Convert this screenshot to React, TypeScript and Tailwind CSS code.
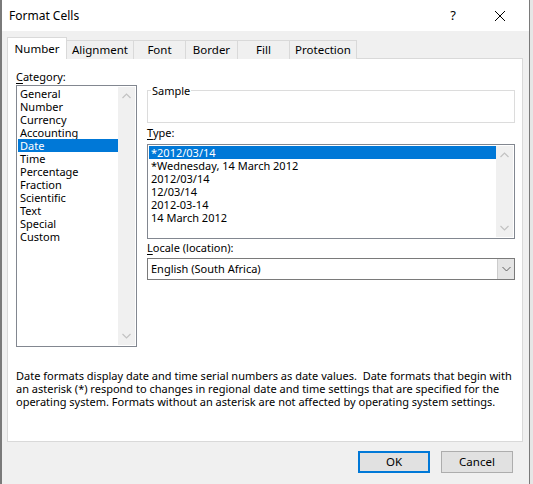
import React from 'react';

const categories = [
  'General', 'Number', 'Currency', 'Accounting', 'Date', 'Time',
  'Percentage', 'Fraction', 'Scientific', 'Text', 'Special', 'Custom',
];

const types = [
  '*2012/03/14',
  '*Wednesday, 14 March 2012',
  '2012/03/14',
  '12/03/14',
  '2012-03-14',
  '14 March 2012',
];

const tabs = ['Alignment', 'Font', 'Border', 'Fill', 'Protection'];
const tabWidths = ['w-[68px]', 'w-[53px]', 'w-[53px]', 'w-[53px]', 'w-[68px]'];

const Chevron = ({ up }: { up?: boolean }) => (
  <svg width="9" height="6" viewBox="0 0 9 6" className="block">
    <path
      d={up ? 'M0.5 5 L4.5 1 L8.5 5' : 'M0.5 1 L4.5 5 L8.5 1'}
      fill="none"
      stroke="#c2c2c2"
      strokeWidth="1.2"
    />
  </svg>
);

const ScrollBar = () => (
  <div className="w-[17px] h-full bg-[#f0f0f0] flex flex-col items-center justify-between py-[6px]">
    <Chevron up />
    <Chevron />
  </div>
);

export default function App() {
  return (
    <div
      className="w-[533px] h-[484px] bg-[#e6e6e6] flex text-[11px] text-black overflow-hidden"
      style={{ fontFamily: '"Noto Sans", "Open Sans", sans-serif' }}
    >
      <div className="w-[530px] h-full flex flex-col bg-[#f0f0f0] border-l-2 border-r border-[#7a7a7a]">
        {/* title bar */}
        <div className="h-[31px] bg-white flex items-center pl-[7px] shrink-0">
          <span className="text-[12px]">Format Cells</span>
          <span className="ml-auto text-[13px] mr-[38px]">?</span>
          <svg width="12" height="12" viewBox="0 0 12 12" className="mr-[23px]">
            <path d="M1 1 L11 11 M11 1 L1 11" stroke="#000" strokeWidth="1" />
          </svg>
        </div>

        <div className="pl-[5px] pt-[7px] flex flex-col">
          {/* tabs */}
          <div className="flex items-end h-[21px] relative z-10 text-[11.5px]">
            <div className="w-[60px] h-[22px] bg-white border border-b-0 border-[#d9d9d9] flex items-center justify-center">
              Number
            </div>
            {tabs.map((t, i) => (
              <div
                key={t}
                className={`${tabWidths[i]} h-[19px] -ml-px bg-[#f0f0f0] border border-b-0 border-[#d9d9d9] flex items-center justify-center`}
              >
                {t}
              </div>
            ))}
          </div>

          {/* panel */}
          <div className="w-[516px] h-[384px] bg-white border border-[#d9d9d9] -mt-px pl-[8px] pr-[7px] pt-[9px] flex flex-col">
            <div className="flex gap-[10px]">
              {/* left column */}
              <div className="w-[121px] flex flex-col">
                <div className="h-[17px] leading-[15px] pt-px">
                  <span className="underline underline-offset-2">C</span>ategory:
                </div>
                <div className="h-[262px] border border-[#828790] flex p-px">
                  <div className="flex-1 flex flex-col">
                    {categories.map((c) => (
                      <div
                        key={c}
                        className={`h-[13px] leading-[13px] pl-[2px] ${
                          c === 'Date' ? 'bg-[#0078d7] text-white' : ''
                        }`}
                      >
                        {c}
                      </div>
                    ))}
                  </div>
                  <ScrollBar />
                </div>
              </div>

              {/* right column */}
              <div className="w-[368px] flex flex-col pt-[22px]">
                <div className="h-[33px] border border-[#dcdcdc] relative">
                  <span className="absolute -top-[7px] left-[3px] bg-white px-[1px] leading-[14px]">
                    Sample
                  </span>
                </div>
                <div className="h-[21px] flex items-center">
                  <span>
                    <span className="underline underline-offset-2">T</span>ype:
                  </span>
                </div>
                <div className="h-[95px] border border-[#828790] flex p-px">
                  <div className="flex-1 flex flex-col">
                    {types.map((t, i) => (
                      <div
                        key={t}
                        className={`h-[13px] leading-[13px] pl-[2px] ${
                          i === 0 ? 'bg-[#0078d7] text-white' : ''
                        }`}
                      >
                        {t}
                      </div>
                    ))}
                  </div>
                  <ScrollBar />
                </div>
                <div className="h-[19px] flex items-center">
                  <span>
                    <span className="underline underline-offset-2">L</span>ocale (location):
                  </span>
                </div>
                <div className="h-[22px] border border-[#7a7a7a] flex items-center pl-[3px]">
                  <span className="flex-1">English (South Africa)</span>
                  <div className="w-[17px] h-[20px] bg-[#e5e5e5] border-l border-[#cccccc] flex items-center justify-center">
                    <svg width="9" height="6" viewBox="0 0 9 6">
                      <path d="M0.5 1 L4.5 5 L8.5 1" fill="none" stroke="#606060" strokeWidth="1" />
                    </svg>
                  </div>
                </div>
              </div>
            </div>

            <div className="mt-[22px] leading-[13px] whitespace-nowrap flex flex-col">
              <span>Date formats display date and time serial numbers as date values.&nbsp; Date formats that begin with</span>
              <span>an asterisk (*) respond to changes in regional date and time settings that are specified for the</span>
              <span>operating system. Formats without an asterisk are not affected by operating system settings.</span>
            </div>
          </div>

          {/* buttons */}
          <div className="flex justify-end gap-[11px] mt-[9px] pr-[16px] text-[11.5px]">
            <button className="w-[72px] h-[22px] bg-[#e1e1e1] border border-[#0078d7] outline outline-1 -outline-offset-2 outline-[#0078d7]">
              OK
            </button>
            <button className="w-[72px] h-[22px] bg-[#e1e1e1] border border-[#adadad]">
              Cancel
            </button>
          </div>
        </div>
      </div>
    </div>
  );
}
